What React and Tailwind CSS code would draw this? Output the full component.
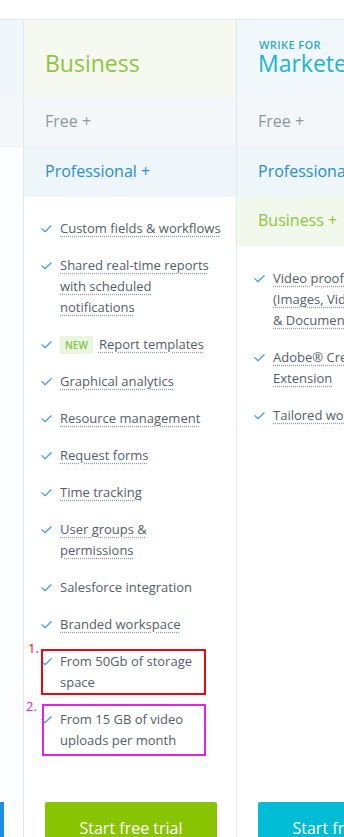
import React from "react";

const Check = () => (
  <svg width="11" height="8" viewBox="0 0 11 8" className="shrink-0 mt-[7px]" fill="none">
    <path d="M0.8 3.6 L4 6.7 L10.2 0.8" stroke="#3d9de0" strokeWidth="1.2" strokeLinecap="round" strokeLinejoin="round" />
  </svg>
);

const U = ({ children, u = true }) => (
  <span
    className={
      "whitespace-nowrap " +
      (u ? "underline decoration-dotted decoration-[#8e99a4] underline-offset-[3px]" : "")
    }
  >
    {children}
  </span>
);

const Item = ({ lines, u = true, badge = false, children }) => (
  <li className="relative flex gap-[8px]">
    <Check />
    <div className="flex flex-col">
      {badge ? (
        <div className="flex items-center gap-[6px]">
          <span className="h-[18px] px-[5px] bg-[#eaf5df] text-[#86c34a] text-[10px] font-semibold leading-[18px]">NEW</span>
          <U u={u}>{lines[0]}</U>
        </div>
      ) : (
        lines.map((l, i) => (
          <div key={i}>
            <U u={u}>{l}</U>
          </div>
        ))
      )}
    </div>
    {children}
  </li>
);

export default function App() {
  const font = { fontFamily: '"Open Sans", "Liberation Sans", sans-serif' };
  return (
    <div className="w-[344px] h-[837px] overflow-hidden bg-white" style={font}>
      <div className="h-[19px]" />
      <div className="border-t border-[#e3eaef] w-[600px]">
        {/* header row */}
        <div className="flex h-[77px]">
          <div className="w-[24px] shrink-0 border-r border-[#e2e9ee] bg-[#eff7fc]" />
          <div className="w-[213px] shrink-0 border-r border-[#e2e9ee] bg-[#f5f9ef] pl-[21px] pt-[27px]">
            <div className="text-[23px] leading-[32px] text-[#8cc63f]">Business</div>
          </div>
          <div className="w-[240px] shrink-0 bg-[#f0f8fb] pl-[21px] pt-[19px]">
            <div className="text-[11px] leading-[12px] font-semibold tracking-[0.4px] text-[#2eaacb] pl-[1px]">WRIKE FOR</div>
            <div className="text-[23px] leading-[28px] -mt-[2px] text-[#1db4d0] whitespace-nowrap">Marketers</div>
          </div>
        </div>
        {/* free row */}
        <div className="flex h-[50px]">
          <div className="w-[24px] shrink-0 border-r border-[#e2e9ee] bg-[#f4f7f9]" />
          <div className="w-[213px] shrink-0 border-r border-[#e2e9ee] bg-[#f4f7f9] pl-[21px] pb-[2px] flex items-center">
            <span className="text-[16px] text-[#8b97a4]">Free +</span>
          </div>
          <div className="w-[240px] shrink-0 bg-[#f4f7f9] pl-[21px] pb-[2px] flex items-center">
            <span className="text-[16px] text-[#8b97a4]">Free +</span>
          </div>
        </div>
        {/* professional row */}
        <div className="flex h-[50px]">
          <div className="w-[24px] shrink-0 border-r border-[#e2e9ee] bg-[#fbfdfe]" />
          <div className="w-[213px] shrink-0 border-r border-[#e2e9ee] bg-[#eef6fa] pl-[21px] pb-[2px] flex items-center">
            <span className="text-[16px] text-[#2a8dcf]">Professional +</span>
          </div>
          <div className="w-[240px] shrink-0 bg-[#eef6fa] pl-[21px] pb-[2px] flex items-center">
            <span className="text-[16px] text-[#2a8dcf] whitespace-nowrap">Professional +</span>
          </div>
        </div>
        {/* features row */}
        <div className="flex text-[13px] leading-[21px] text-[#525e6a]">
          <div className="w-[24px] shrink-0 border-r border-[#e2e9ee] bg-[#fbfdfe]" />
          <div className="w-[213px] shrink-0 border-r border-[#e2e9ee] pl-[17px] pt-[21px] pb-[51px]">
            <ul className="flex flex-col gap-[16px]">
              <Item lines={["Custom fields & workflows"]} />
              <Item lines={["Shared real-time reports", "with scheduled", "notifications"]} />
              <Item lines={["Report templates"]} badge />
              <Item lines={["Graphical analytics"]} />
              <Item lines={["Resource management"]} />
              <Item lines={["Request forms"]} />
              <Item lines={["Time tracking"]} />
              <Item lines={["User groups &", "permissions"]} />
              <Item lines={["Salesforce integration"]} u={false} />
              <Item lines={["Branded workspace"]} />
              <Item lines={["From 50Gb of storage", "space"]} u={false}>
                <div className="absolute left-0 top-[-2px] bottom-[-2px] w-[165px] border-2 border-[#e50914]" />
                <div className="absolute left-[-13px] top-[-9px] text-[13px] leading-[13px] text-[#e50914]">1.</div>
              </Item>
              <Item lines={["From 15 GB of video", "uploads per month"]} u={false}>
                <div className="absolute left-[1px] top-[-5px] bottom-[-5px] w-[164px] border-2 border-[#e620e6]" />
                <div className="absolute left-[-15px] top-[-9px] text-[13px] leading-[13px] text-[#e620e6]">2.</div>
              </Item>
            </ul>
          </div>
          <div className="w-[240px] shrink-0 flex flex-col">
            <div className="h-[49px] bg-[#f2f8eb] pl-[21px] pb-[2px] flex items-center">
              <span className="text-[16px] text-[#8cc63f]">Business +</span>
            </div>
            <div className="pl-[17px] pt-[22px]">
              <ul className="flex flex-col gap-[16px]">
                <Item lines={["Video proofing", "(Images, Videos", "& Documents)"]} />
                <Item lines={["Adobe® Creative Cloud", "Extension"]} />
                <Item lines={["Tailored workflows"]} />
              </ul>
            </div>
          </div>
        </div>
        {/* buttons row */}
        <div className="flex h-[60px]">
          <div className="w-[24px] shrink-0 border-r border-[#e2e9ee] flex">
            <div className="w-[4px] h-[50px] bg-[#1a8de6]" />
          </div>
          <div className="w-[213px] shrink-0 border-r border-[#e2e9ee] pl-[21px]">
            <div className="w-[172px] h-[50px] rounded-[2px] bg-[#89c402] flex items-center justify-center text-white text-[16px] pt-[1px]">
              Start free trial
            </div>
          </div>
          <div className="w-[240px] shrink-0 pl-[21px]">
            <div className="w-[172px] h-[50px] rounded-[2px] bg-[#00bcd4] flex items-center justify-center text-white text-[16px] pt-[1px]">
              Start free trial
            </div>
          </div>
        </div>
      </div>
    </div>
  );
}
